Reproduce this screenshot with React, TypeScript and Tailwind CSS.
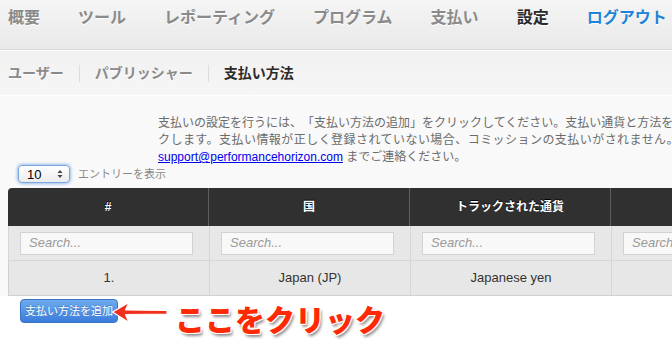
import React from "react";

const navItems = [
  { label: "概要", tone: "text-[#8a8a8a]" },
  { label: "ツール", tone: "text-[#8a8a8a]" },
  { label: "レポーティング", tone: "text-[#8a8a8a]" },
  { label: "プログラム", tone: "text-[#8a8a8a]" },
  { label: "支払い", tone: "text-[#8a8a8a]" },
  { label: "設定", tone: "text-[#2b2b2b]" },
  { label: "ログアウト", tone: "text-[#1f84d8]" },
];

const columns = ["#", "国", "トラックされた通貨", ""];
const row = ["1.", "Japan (JP)", "Japanese yen", ""];

export default function App() {
  return (
    <div className="relative h-[362px] w-[672px] overflow-hidden bg-white font-['Liberation_Sans','Noto_Sans_CJK_JP',sans-serif]">
      {/* Top nav */}
      <nav className="flex h-[50px] items-start gap-[38px] border-b border-[#d9d9d9] bg-gradient-to-b from-[#f5f5f5] to-[#e9e9e9] pl-2 pt-[7px]">
        {navItems.map((item) => (
          <span
            key={item.label}
            className={`whitespace-nowrap text-[16px] font-bold leading-[22px] [text-shadow:0_1px_0_#fff] ${item.tone}`}
          >
            {item.label}
          </span>
        ))}
      </nav>

      {/* Sub nav */}
      <div className="flex h-[46px] items-center gap-[15px] border-t border-b border-white bg-gradient-to-b from-[#f1f1f1] to-[#f6f6f6] pl-2">
        <span className="text-[14px] font-bold text-[#8a8a8a] [text-shadow:0_1px_0_#fff]">ユーザー</span>
        <span className="h-[17px] w-px bg-[#dcdcdc]" />
        <span className="text-[14px] font-bold text-[#8a8a8a] [text-shadow:0_1px_0_#fff]">パブリッシャー</span>
        <span className="h-[17px] w-px bg-[#dcdcdc]" />
        <span className="text-[14px] font-bold text-[#2b2b2b]">支払い方法</span>
      </div>

      {/* Content */}
      <div className="bg-[#f9f9f9] pt-[19px]">
        <p className="whitespace-nowrap pl-[158px] text-[12px] leading-[17px] text-[#6b6b6b]">
          支払いの設定を行うには、<span className="inline-block">「</span>支払い方法の追加」をクリックしてください。支払い通貨と方法を選択し「保存」をクリッ
          <br />
          <span className="tracking-[0.45px]">
            クします。支払い情報が正しく登録されていない場合、コミッションの支払いがされません。ご不明な点は
          </span>
          <br />
          <a className="text-[#0000ee] underline">support@performancehorizon.com</a>
          <span> までご連絡ください。</span>
        </p>

        <div className="-mt-px flex items-center gap-2 pl-[18px]">
          <div className="flex h-[18px] w-[52px] items-center justify-between rounded-[4px] border border-[#7aa7e0] bg-gradient-to-b from-white to-[#ececec] pl-2 pr-[6px] shadow-[0_0_3px_1px_rgba(90,150,230,0.6)]">
            <span className="text-[13px] leading-none text-black">10</span>
            <svg width="6" height="10" viewBox="0 0 6 10">
              <path d="M3 1 L5.5 4 H0.5 Z M3 9 L0.5 6 H5.5 Z" fill="#444" />
            </svg>
          </div>
          <span className="text-[11px] text-[#8a8a8a]">エントリーを表示</span>
        </div>

        {/* Table */}
        <div className="ml-2 mt-[5px] w-[820px]">
          <div className="grid h-[38px] grid-cols-[200px_201px_201px_218px] rounded-tl-[4px] bg-[#303030]">
            {columns.map((c, i) => (
              <div
                key={i}
                className={`flex items-center justify-center text-[12px] font-bold text-white [text-shadow:0_-1px_0_#000] ${i > 0 ? "border-l border-[#5e5e5e]" : ""}`}
              >
                {c}
              </div>
            ))}
          </div>
          <div className="grid h-[35px] grid-cols-[200px_201px_201px_218px] border-b border-l border-[#d6d6d6] bg-[#e7e7e7]">
            {columns.map((_, i) => (
              <div
                key={i}
                className={`flex items-center pl-[11px] pr-4 ${i > 0 ? "border-l border-[#d6d6d6] pl-3" : ""}`}
              >
                <div className="flex h-[23px] w-full items-center border border-[#d2d2d2] bg-[#f8f8f8] pl-2 text-[13px] italic text-[#9a9a9a]">
                  Search...
                </div>
              </div>
            ))}
          </div>
          <div className="grid h-[35px] grid-cols-[200px_201px_201px_218px] border-b border-l border-[#d0d0d0] bg-[#e7e7e7]">
            {row.map((c, i) => (
              <div
                key={i}
                className={`flex items-center justify-center text-[13px] text-[#333] ${i > 0 ? "border-l border-[#d6d6d6]" : ""}`}
              >
                {c}
              </div>
            ))}
          </div>
        </div>
      </div>

      {/* Add button + annotation */}
      <div className="relative pl-5 pt-[2px]">
        <button className="h-[24px] w-[98px] rounded-[4px] border border-[#3a72c6] bg-gradient-to-b from-[#6eabef] to-[#3a7cdb] text-[11px] text-white [text-shadow:0_-1px_0_rgba(0,0,0,0.2)]">
          支払い方法を追加
        </button>
        <svg className="absolute left-[111px] top-[5px]" width="58" height="23" viewBox="0 0 58 23">
          <path d="M1.5 11 L18 1.5 L14.5 9 L56 9.5 L56 13 L14.5 13.5 L18 21.5 Z" fill="#f0301c" stroke="#fff" strokeWidth="1.2" strokeLinejoin="round" />
        </svg>
        <span className="absolute left-[175px] top-[4px] whitespace-nowrap font-['Noto_Sans_CJK_JP',sans-serif] text-[30px] font-black leading-[36px] text-[#ff2a05] [text-shadow:-1px_-1px_0_#fff,1px_-1px_0_#fff,-1px_1px_0_#fff,1px_1px_0_#fff,2px_3px_3px_rgba(0,0,0,0.45)]">
          ここをクリック
        </span>
      </div>
    </div>
  );
}
